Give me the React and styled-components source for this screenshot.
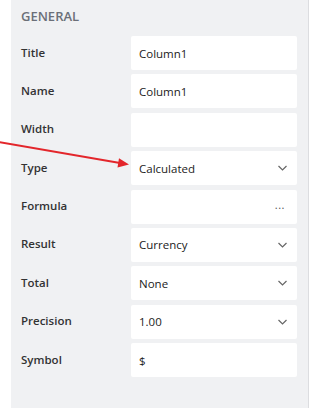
import React from "react"
import styled, { createGlobalStyle } from "styled-components"

const GlobalStyle = createGlobalStyle`
  html, body {
    margin: 0;
    padding: 0;
    background: #fff;
  }
  body {
    font-family: "Open Sans", "Noto Sans", sans-serif;
  }
`

const Page = styled.div`
  position: relative;
  display: flex;
  width: 312px;
  height: 408px;
  overflow: hidden;
  background: #fff;
`

const Panel = styled.section`
  margin-left: 11px;
  width: 298px;
  height: 100%;
  box-sizing: border-box;
  background: #f0f1f3;
  border-right: 1px solid #dcdde0;
  padding: 7px 12px 0 10px;
`

const Heading = styled.h2`
  margin: 0 0 0;
  height: 29px;
  font-size: 13px;
  line-height: 18px;
  font-weight: 600;
  color: #6b6f78;
  padding-left: 0;
`

const Fields = styled.div`
  display: grid;
  grid-template-columns: 110px 166px;
  grid-auto-rows: 34px;
  row-gap: 4.375px;
`

const Label = styled.label`
  display: flex;
  align-items: center;
  font-size: 11.5px;
  font-weight: 600;
  color: #333;
  padding-bottom: 2px;
`

const Input = styled.div`
  display: flex;
  align-items: center;
  justify-content: space-between;
  background: #fff;
  border-radius: 2px;
  padding: 0 10px 0 8px;
  font-size: 11.5px;
  color: #222;
`

const Chevron = () => (
  <svg width="9" height="6" viewBox="0 0 9 6">
    <polyline
      points="0.5,1 4.5,5 8.5,1"
      fill="none"
      stroke="#666"
      strokeWidth="1.2"
    />
  </svg>
)

const Dots = styled.span`
  font-size: 11px;
  color: #555;
  letter-spacing: 0.5px;
  margin-right: 2px;
  transform: translateY(-2px);
`

const Arrow = styled.svg`
  position: absolute;
  left: 0;
  top: 0;
  pointer-events: none;
`

const fields = [
  { label: "Title", value: "Column1" },
  { label: "Name", value: "Column1" },
  { label: "Width", value: "" },
  { label: "Type", value: "Calculated", kind: "select" },
  { label: "Formula", value: "", kind: "dots" },
  { label: "Result", value: "Currency", kind: "select" },
  { label: "Total", value: "None", kind: "select" },
  { label: "Precision", value: "1.00", kind: "select" },
  { label: "Symbol", value: "$" }
]

export default () => (
  <Page>
    <GlobalStyle />
    <Panel>
      <Heading>GENERAL</Heading>
      <Fields>
        {fields.map(({ label, value, kind }) => (
          <React.Fragment key={label}>
            <Label>{label}</Label>
            <Input>
              <span>{value}</span>
              {kind === "select" && <Chevron />}
              {kind === "dots" && <Dots>...</Dots>}
            </Input>
          </React.Fragment>
        ))}
      </Fields>
    </Panel>
    <Arrow width="312" height="408" viewBox="0 0 312 408">
      <line x1="-2" y1="142" x2="120" y2="163" stroke="#e3262b" strokeWidth="2" />
      <polygon points="129,164.6 117.5,167.5 119,158.3" fill="#e3262b" />
    </Arrow>
  </Page>
)
